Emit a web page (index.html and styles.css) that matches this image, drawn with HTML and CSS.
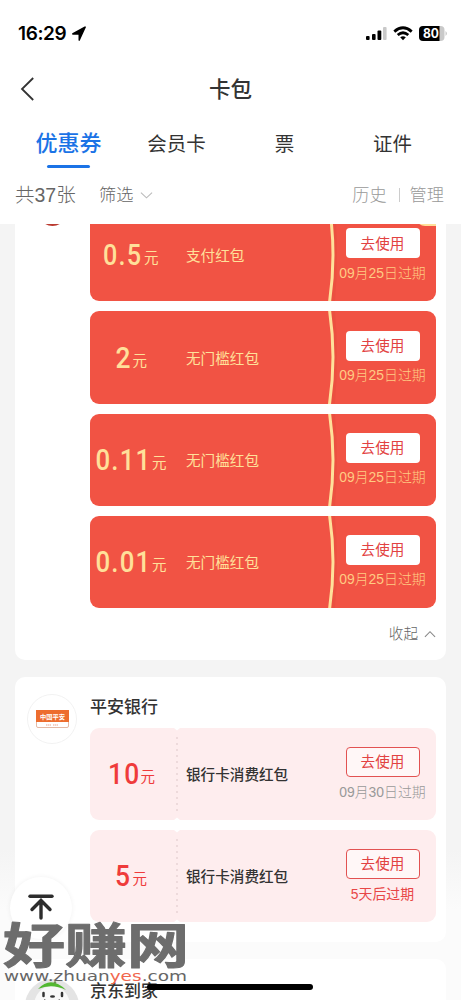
FILE: index.html
```
<!DOCTYPE html>
<html lang="zh-CN">
<head>
<meta charset="utf-8">
<title>卡包</title>
<link rel="stylesheet" href="styles.css">
</head>
<body>
<div class="phone">
  <header class="top">
    <div class="status">
      <div class="clock"><span>16:29</span>
        <svg width="16" height="16" viewBox="0 0 16 16"><path d="M15 1 8.800 14.600Q7.800 15.600 7.500 14V8.800H2Q.2 8.400 1.300 7.200L13.600.6Q15.200 0 15 1Z"/></svg>
      </div>
      <svg class="signals" width="83" height="18" viewBox="0 0 83 18">
        <rect x="1" y="10" width="3.6" height="4" rx="1"/><rect x="7" y="8" width="3.6" height="6" rx="1"/><rect x="12.500" y="4.500" width="3.800" height="9.500" rx="1"/><rect class="dim" x="18" y="1" width="3.600" height="13" rx="1"/>
        <path class="wave" d="M29.300 5.600Q38 -2 46.700 5.600M32.700 9Q38 4.600 43.300 9"/><path d="M35.200 11.300Q38 9.300 40.800 11.300L38 14.200Z"/>
        <path class="dim" d="M70 0h5.500a4 4 0 0 1 4 4v7a4 4 0 0 1-4 4H70ZM80.500 5q3 2.500 0 5Z"/><path d="M58 0h16.500v15H58a4 4 0 0 1-4-4V4a4 4 0 0 1 4-4Z"/>
        <text x="58" y="12" textLength="16" lengthAdjust="spacingAndGlyphs">80</text>
      </svg>
    </div>
    <div class="nav">
      <svg class="back" width="16" height="26" viewBox="0 0 16 26"><path d="M14.200 2 3 13 14.200 24"/></svg>
      <h1>卡包</h1>
    </div>
    <nav class="tabs"><div class="tab active">优惠券</div><div class="tab">会员卡</div><div class="tab">票</div><div class="tab">证件</div></nav>
    <div class="filters">
      <span class="count">共37张</span><span class="sift">筛选</span>
      <svg width="13" height="9" viewBox="0 0 14 9"><path d="M1 1.500 7 7 13 1.500"/></svg>
      <span class="history">历史</span><i></i><span>管理</span>
    </div>
  </header>

  <main class="feed">
    <section class="card first">
      <div class="logo"><svg width="50" height="50" viewBox="0 0 50 50"><circle cx="25" cy="25" r="24.500" fill="#fff"/><ellipse cx="25.500" cy="20" rx="13" ry="12" fill="#ba3a30"/></svg></div>
      <div class="body">
        <div class="coupon red">
          <svg class="amount" width="86" height="92"><g transform="translate(13 56) scale(.84 1)"><text>0.5</text></g><text class="unit" x="54" y="53.500">元</text></svg>
          <div class="name">支付红包</div>
          <svg class="arc" width="12" height="92.200" viewBox="0 0 12 92.200"><path class="shade" d="M3 0Q11 46 3 92.200H8Q12 46 8 0Z"/><path d="M2.500 -1Q9.500 46 2.500 93.200"/></svg>
          <div class="action"><button>去使用</button><time>09月25日过期</time></div>
          <div class="ribbon"></div>
        </div>
        <div class="coupon red">
          <svg class="amount" width="86" height="92"><g transform="translate(25.500 56) scale(.88 1)"><text>2</text></g><text class="unit" x="42.500" y="53.500">元</text></svg>
          <div class="name">无门槛红包</div>
          <svg class="arc" width="12" height="92.200" viewBox="0 0 12 92.200"><path class="shade" d="M3 0Q11 46 3 92.200H8Q12 46 8 0Z"/><path d="M2.500 -1Q9.500 46 2.500 93.200"/></svg>
          <div class="action"><button>去使用</button><time>09月25日过期</time></div>
        </div>
        <div class="coupon red">
          <svg class="amount" width="86" height="92"><g transform="translate(5.500 56) scale(.86 1)"><text>0.11</text></g><text class="unit" x="62" y="53.500">元</text></svg>
          <div class="name">无门槛红包</div>
          <svg class="arc" width="12" height="92.200" viewBox="0 0 12 92.200"><path class="shade" d="M3 0Q11 46 3 92.200H8Q12 46 8 0Z"/><path d="M2.500 -1Q9.500 46 2.500 93.200"/></svg>
          <div class="action"><button>去使用</button><time>09月25日过期</time></div>
        </div>
        <div class="coupon red">
          <svg class="amount" width="86" height="92"><g transform="translate(5.500 56) scale(.86 1)"><text>0.01</text></g><text class="unit" x="62" y="53.500">元</text></svg>
          <div class="name">无门槛红包</div>
          <svg class="arc" width="12" height="92.200" viewBox="0 0 12 92.200"><path class="shade" d="M3 0Q11 46 3 92.200H8Q12 46 8 0Z"/><path d="M2.500 -1Q9.500 46 2.500 93.200"/></svg>
          <div class="action"><button>去使用</button><time>09月25日过期</time></div>
        </div>
        <div class="collapse">收起 <svg width="12" height="8" viewBox="0 0 13 8"><path d="M1 7 6.500 1.500 12 7"/></svg></div>
      </div>
    </section>

    <section class="card bank">
      <div class="logo">
        <svg width="50" height="50" viewBox="0 0 50 50"><circle cx="25" cy="25" r="24.500" fill="#fff" stroke="#f2f2f2"/><rect x="9.500" y="16.500" width="32" height="17" rx="1.500" fill="#fff" stroke="#e5b9a5"/><path d="M9 16h33v12H9Z" fill="#ed6d2e"/><text class="tiny" x="13" y="24.500" textLength="25" lengthAdjust="spacingAndGlyphs">中国平安</text><path d="M19 31h5m2 0h5" stroke="#eda48a" stroke-width="1.200" stroke-dasharray="1.500 .5"/></svg>
      </div>
      <div class="body">
        <h2>平安银行</h2>
        <div class="coupon pink">
          <svg class="amount" width="86" height="92"><g transform="translate(18 56) scale(.88 1)"><text>10</text></g><text class="unit" x="50.500" y="53.500">元</text></svg>
          <div class="name">银行卡消费红包</div>
          <div class="action"><button>去使用</button><time>09月30日过期</time></div>
          <svg class="tear" width="8" height="92" viewBox="0 0 8 92"><path d="M1 0h6L4 2.500ZM1 92h6L4 89.500Z"/><path class="dots" d="M4 9v76"/></svg>
        </div>
        <div class="coupon pink">
          <svg class="amount" width="86" height="92"><g transform="translate(25 56) scale(.88 1)"><text>5</text></g><text class="unit" x="42.500" y="53.500">元</text></svg>
          <div class="name">银行卡消费红包</div>
          <div class="action"><button>去使用</button><time class="soon">5天后过期</time></div>
          <svg class="tear" width="8" height="92" viewBox="0 0 8 92"><path d="M1 0h6L4 2.500ZM1 92h6L4 89.500Z"/><path class="dots" d="M4 9v76"/></svg>
        </div>
      </div>
    </section>

    <section class="card home">
      <div class="logo">
        <svg width="56" height="56" viewBox="0 0 56 56"><circle cx="28" cy="28" r="27" fill="#e4e4e4"/><ellipse cx="28" cy="28" rx="18" ry="20" fill="#f8f8f8"/><path d="M14 11Q27-3 42 12Q28 5 14 11Z" fill="#52b830"/><circle cx="31" cy="4.500" r="1.200" fill="#69944e"/><path d="M19.500 15v3M38 15v3" stroke="#333" stroke-width="2.500" stroke-linecap="round"/><ellipse cx="28.500" cy="18.500" rx="2.500" ry="1.300" fill="#333"/><path d="M20 22q8 4 16 0" stroke="#444" stroke-width="1.500" fill="none"/></svg>
      </div>
      <div class="body"><h2>京东到家</h2></div>
    </section>
  </main>

  <div class="to-top"><svg width="28" height="28" viewBox="0 0 28 28"><path d="M3 4.200H25"/><path d="M14 26V10M5 17.500 14 8.500 23 17.500"/></svg></div>
  <div class="home-bar"></div>
  <svg class="watermark" width="192" height="70" viewBox="0 0 192 70">
    <text class="brand" x="3" y="44.500" textLength="186" lengthAdjust="spacingAndGlyphs">好赚网</text>
    <text class="site" x="4" y="62.500" textLength="183" lengthAdjust="spacingAndGlyphs">www.zhuan<tspan>yes</tspan>.com</text>
  </svg>
</div>
</body>
</html>
```
FILE: styles.css
```
* { box-sizing: border-box; }
body { margin: 0; font-family: "Liberation Sans", "Noto Sans CJK SC", sans-serif; }
svg { display: block; flex: none; }
.phone { position: relative; width: 461px; height: 1000px; overflow: hidden; background: linear-gradient(#f4f4f4 0 850px, #fbfbfb 910px); }
.top { height: 224px; background: #fff; }

.status { height: 66px; padding: 0 13px 0 18px; display: flex; justify-content: space-between; align-items: center; }
.clock { display: flex; align-items: center; gap: 5px; font: 600 19px/20px Inter, sans-serif; letter-spacing: -.4px; color: #000; padding-top: 2px; }
.signals { margin-top: 3px; }
.signals .dim { fill: #c9c9c9; }
.signals .wave { fill: none; stroke: #000; stroke-width: 2.800; }
.signals text { font: 700 12.500px Inter, sans-serif; fill: #fff; }

.nav { height: 45px; display: grid; grid-template-columns: 60px 1fr 60px; align-items: center; }
.back { margin-left: 19px; fill: none; stroke: #333; stroke-width: 1.800; }
h1 { margin: 0; padding-top: 2px; text-align: center; font-size: 21.500px; line-height: 30px; font-weight: 500; color: #333; }

.tabs { height: 65px; padding: 1px 14.500px 0; display: grid; grid-template-columns: repeat(4, 108px); text-align: center; font-size: 19.500px; line-height: 64px; color: #333; }
.tab.active { color: #1b73e6; font-size: 22px; font-weight: 500; }
.tab.active::after { content: ""; display: block; width: 43px; height: 2.500px; margin: -11px auto 0; border-radius: 2px; background: #1b73e6; }

.filters { height: 37px; padding: 1px 17px 0 15px; display: flex; align-items: center; font-size: 17.200px; line-height: 37px; color: #999; font-weight: 300; }
.count { font-size: 19.500px; color: #666; width: 84px; }
.sift { color: #666; width: 41px; }
.filters svg { fill: none; stroke: #bbb; stroke-width: 1.200; }
.history { margin-left: auto; }
.filters i { width: 1px; height: 14px; margin: 0 10px 0 12px; background: #ccc; }

.feed { height: 776px; overflow: hidden; display: flex; flex-direction: column; gap: 17px; padding: 0 15px; }
.card { flex: none; display: grid; grid-template-columns: 75px 346px; background: #fff; border-radius: 10px; }
.card.first { margin-top: -50px; height: 486px; padding-top: 35.300px; border-radius: 0 0 10px 10px; }
.first .logo { margin: -15px 0 0 12px; }
.bank { height: 264.500px; padding-top: 17px; }
.bank .logo { padding-left: 12px; }
.home { height: 70px; padding-top: 19px; }
.home .logo { padding-left: 9px; }
.body { display: flex; flex-direction: column; gap: 10px; }
h2 { margin: 0; font-size: 17px; line-height: 28px; height: 24px; font-weight: 500; color: #333; }

.coupon { position: relative; flex: none; height: 92.200px; width: 346px; display: grid; align-items: center; border-radius: 9px; overflow: hidden; }
.red { grid-template-columns: 96px 141px 12px 87px; background: #f15344; color: #ffe09a; }
.pink { grid-template-columns: 96px 153px 87px; background: #feedee; color: #333; }
.amount text { font: 500 30px Roboto, sans-serif; letter-spacing: 1.400px; fill: #ffe09a; }
.amount .unit { font: 400 14.500px "Noto Sans CJK SC", sans-serif; letter-spacing: 0; }
.pink .amount text { fill: #ef3b3b; }
.name { font-size: 14.600px; line-height: 20px; padding-top: 2px; white-space: nowrap; }
.pink .name { font-weight: 500; }
.arc { fill: none; stroke: #ffe09a; stroke-width: 3; }
.arc .shade { fill: #eb5040; stroke: none; }
.action { height: 92px; padding-top: 19px; display: flex; flex-direction: column; align-items: center; }
button { width: 74px; height: 30px; padding: 1px 0 0; border: 0; border-radius: 4px; background: #fff; color: #e24242; font: 400 14.600px/28px "Liberation Sans", "Noto Sans CJK SC", sans-serif; }
.pink button { padding: 0; border: 1.400px solid #e25252; background: #fff7f7; }
time { font-size: 13.900px; line-height: 20px; margin-top: 4.500px; font-weight: 300; white-space: nowrap; color: #ffcb83; }
.pink time { color: #999; }
.pink .soon { color: #e84646; font-weight: 400; }
.ribbon { position: absolute; right: 0; top: 4px; width: 20px; height: 13px; background: #ffe09a; border-radius: 0 0 0 9px; }
.tear { position: absolute; left: 83px; top: 0; fill: #fff; }
.tear .dots { stroke: #e5d0d2; stroke-width: 1.300; stroke-dasharray: 2 4; }
.tiny { font: 700 6px "Noto Sans CJK SC", sans-serif; fill: #fff; }
.collapse { display: flex; align-items: center; justify-content: flex-end; gap: 6px; margin-top: 6px; font-size: 14.600px; line-height: 20px; color: #666; font-weight: 300; }
.collapse svg { fill: none; stroke: #888; stroke-width: 1.200; }

.to-top { position: absolute; left: 10px; top: 877px; width: 62px; height: 62px; border-radius: 50%; background: #fff; box-shadow: 0 0 5px rgba(0,0,0,.06); display: grid; place-items: center; }
.to-top path { fill: none; stroke: #2d2d2d; stroke-width: 3.400; stroke-linecap: round; }
.to-top svg { margin-top: -5px; }
.home-bar { position: absolute; left: 147px; top: 984px; width: 166px; height: 6px; border-radius: 3px; background: #000; }
.watermark { position: absolute; left: 0; top: 918px; }
.brand { font: 700 48px "Noto Sans CJK SC", sans-serif; fill: #6d6d6d; stroke: #6d6d6d; stroke-width: 1; stroke-linejoin: round; }
.site { font: 400 14px "DejaVu Sans", sans-serif; fill: #666; }
.site tspan { fill: #f1674e; }
```
